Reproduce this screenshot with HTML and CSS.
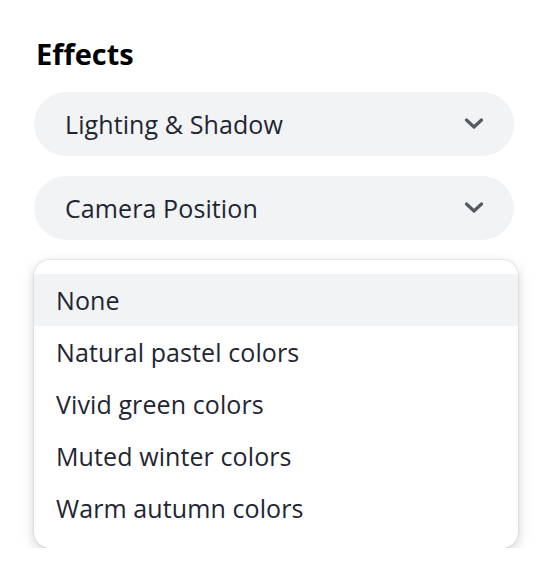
FILE: index.html
```html
<!DOCTYPE html>
<html>
<head>
<meta charset="utf-8">
<link rel="stylesheet" href="styles.css">
</head>
<body>
<div class="panel">
  <h2 class="title">Effects</h2>
  <div class="select">
    <span class="select-label">Lighting &amp; Shadow</span>
    <svg class="chev" width="20" height="12" viewBox="0 0 20 12"><path d="M2.5 2 L10 9 L17.5 2" fill="none" stroke="#545b64" stroke-width="3.2" stroke-linecap="round" stroke-linejoin="round"/></svg>
  </div>
  <div class="select">
    <span class="select-label">Camera Position</span>
    <svg class="chev" width="20" height="12" viewBox="0 0 20 12"><path d="M2.5 2 L10 9 L17.5 2" fill="none" stroke="#545b64" stroke-width="3.2" stroke-linecap="round" stroke-linejoin="round"/></svg>
  </div>
  <ul class="menu">
    <li class="item active">None</li>
    <li class="item">Natural pastel colors</li>
    <li class="item">Vivid green colors</li>
    <li class="item">Muted winter colors</li>
    <li class="item">Warm autumn colors</li>
  </ul>
</div>
</body>
</html>
```
FILE: styles.css
```css
html, body {
  margin: 0;
  padding: 0;
  background: #ffffff;
}
body {
  font-family: "Open Sans", "Noto Sans", sans-serif;
  color: #1f2633;
}
.panel {
  padding: 34px 42px 0 34px;
  display: flex;
  flex-direction: column;
}
.title {
  margin: 0 0 0 2px;
  font-size: 29px;
  line-height: 40px;
  font-weight: 700;
  color: #000;
  height: 58px;
}
.select {
  width: 480px;
  height: 64px;
  border-radius: 32px;
  background: #f2f3f5;
  display: flex;
  align-items: center;
  justify-content: space-between;
  padding: 0 30px 0 31px;
  box-sizing: border-box;
  margin-bottom: 20px;
}
.select-label {
  font-size: 25px;
  letter-spacing: 0.1px;
  color: #1f2633;
}
.chev {
  display: block;
}
.menu {
  list-style: none;
  margin: 0;
  padding: 14px 0;
  width: 484px;
  box-sizing: border-box;
  border-radius: 16px;
  background: #fff;
  box-shadow: 0 0 0 1px rgba(0,0,0,0.06), 0 4px 14px rgba(0,0,0,0.18);
}
.item {
  height: 52px;
  display: flex;
  align-items: center;
  padding-left: 22px;
  font-size: 25px;
  letter-spacing: 0.1px;
  color: #1f2633;
}
.item.active {
  background: #f2f3f5;
}
```
